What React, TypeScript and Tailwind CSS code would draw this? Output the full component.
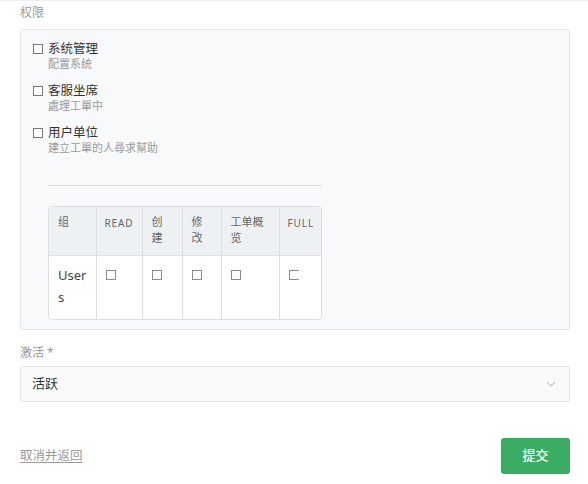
import React from 'react';

const font = { fontFamily: '"Noto Sans", "Noto Sans CJK SC", sans-serif' };

const roles = [
  { name: '系统管理', note: '配置系统' },
  { name: '客服坐席', note: '處理工單中' },
  { name: '用户单位', note: '建立工單的人尋求幫助' },
];

function Box({ className = '' }: { className?: string }) {
  return <span className={`block h-[10px] w-[10px] shrink-0 border border-[#8a8a8a] bg-white ${className}`} />;
}

function PermissionTable() {
  const heads = [
    { label: '组', w: 'w-[47px]' },
    { label: 'READ', w: 'w-[46px]', latin: true },
    { label: '创建', w: 'w-[40px]' },
    { label: '修改', w: 'w-[39px]' },
    { label: '工单概览', w: 'w-[58px]' },
    { label: 'FULL', w: 'w-[44px]', latin: true },
  ];
  return (
    <div className="w-[274px] overflow-hidden rounded-[4px] border border-[#dcdfe2] bg-white">
      <table className="w-full table-fixed border-collapse">
        <thead>
          <tr className="h-[48px] bg-[#eef1f3]">
            {heads.map((h, i) => (
              <th
                key={h.label}
                className={`${h.w} ${i > 0 ? 'border-l border-[#dcdfe2]' : ''} pt-[7px] align-top text-left font-normal text-[#666] ${
                  h.latin
                    ? 'whitespace-nowrap pl-[8px] pr-0 text-[10px] font-medium tracking-[0.9px] leading-[18px]'
                    : 'break-all px-[9px] text-[11px] leading-[16px]'
                }`}
              >
                {h.label}
              </th>
            ))}
          </tr>
        </thead>
        <tbody>
          <tr className="h-[64px] border-t border-[#dcdfe2]">
            <td className="break-all px-[9px] pt-[8px] align-top text-[13px] leading-[22px] text-[#444]">Users</td>
            {[0, 1, 2, 3].map((k) => (
              <td key={k} className="border-l border-[#dcdfe2] px-[9px] pt-[14px] align-top">
                <Box />
              </td>
            ))}
            <td className="border-l border-[#dcdfe2] pl-[9px] pt-[14px] align-top">
              <span className="block h-[10px] w-[10px] border border-r-0 border-[#8a8a8a] bg-white" />
            </td>
          </tr>
        </tbody>
      </table>
    </div>
  );
}

export default function App() {
  return (
    <div className="min-h-[484px] w-[588px] border-t border-[#efefef] bg-white" style={font}>
      <div className="pl-[20px] pr-[18px]">
        <div className="pt-[3px] text-[12px] leading-[18px] text-[#999]">权限</div>
        <div className="mt-[7px] rounded-[3px] border border-[#e3e6e8] bg-[#f7f9fa] pb-[9px] pl-[12px] pt-[10px]">
          <div className="flex flex-col gap-[11px]">
            {roles.map((r) => (
              <div key={r.name} className="flex items-start">
                <Box className="mt-[4px] border-[#777]" />
                <div className="ml-[5px]">
                  <div className="text-[12.5px] leading-[17px] text-[#333]">{r.name}</div>
                  <div className="text-[11px] leading-[14px] text-[#999]">{r.note}</div>
                </div>
              </div>
            ))}
          </div>
          <div className="ml-[15px] mt-[30px] w-[274px] border-t border-[#dde0e3]" />
          <div className="ml-[15px] mt-[20px]">
            <PermissionTable />
          </div>
        </div>
        <div className="mt-[14px] text-[12px] leading-[18px] text-[#999]">激活 *</div>
        <div className="mt-[4px] flex h-[36px] items-center justify-between rounded-[3px] border border-[#e3e6e8] bg-[#f9fafb] pl-[11px] pr-[13px]">
          <span className="text-[13px] text-[#333]">活跃</span>
          <svg width="10" height="6" viewBox="0 0 10 6" fill="none">
            <path d="M1 1l4 4 4-4" stroke="#c4c8cc" strokeWidth="1.2" />
          </svg>
        </div>
        <div className="mt-[36px] flex items-center justify-between">
          <a className="text-[12.5px] text-[#999] underline underline-offset-2">取消并返回</a>
          <button className="h-[36px] w-[69px] rounded-[3px] bg-[#38ad63] text-[13px] font-medium text-white">提交</button>
        </div>
      </div>
    </div>
  );
}
